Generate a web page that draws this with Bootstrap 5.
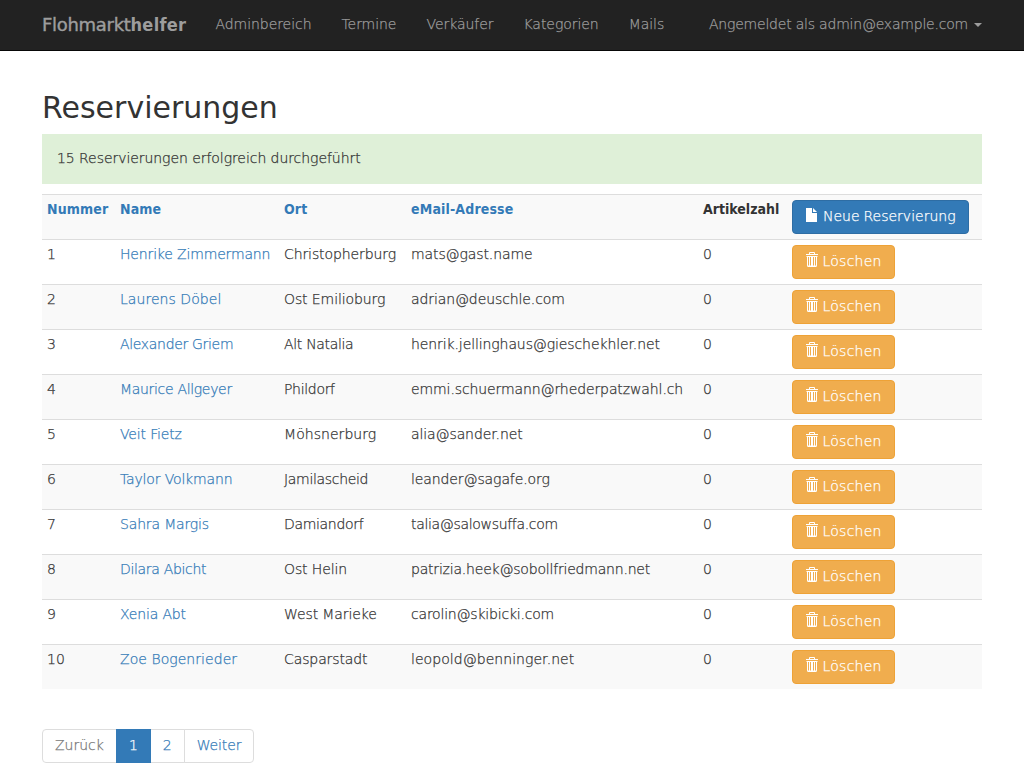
<!DOCTYPE html>
<html lang="de">
<head>
<meta charset="utf-8">
<meta name="viewport" content="width=device-width, initial-scale=1">
<title>Flohmarkthelfer</title>
<link href="https://cdn.jsdelivr.net/npm/bootstrap@5.3.0/dist/css/bootstrap.min.css" rel="stylesheet">
<style>
body{font-family:"DejaVu Sans",sans-serif;font-size:14px;line-height:20px;font-weight:200;color:#333;overflow:hidden;-webkit-text-stroke:.25px currentColor}
a{color:#337ab7;text-decoration:none}
.page-box{width:940px;margin:0 auto}
.topbar{height:51px;background:#222;border-bottom:1px solid #080808;padding:0}
.topbar .navbar-brand{font-size:18px;line-height:20px;font-weight:400;color:#9d9d9d;padding:15px 0;margin:0 14px 0 0;letter-spacing:-.3px;-webkit-text-stroke:.4px currentColor}
.topbar .navbar-brand b{font-family:"DejaVu Sans Condensed","DejaVu Sans",sans-serif;font-stretch:condensed;letter-spacing:.3px;-webkit-text-stroke:0}
.topbar .nav-link{color:#9d9d9d;padding:14px 15px 16px!important;line-height:20px;letter-spacing:-.05px}
.topbar .dropdown-toggle{padding-right:0!important;letter-spacing:-.21px}
.topbar .dropdown-toggle::after{border-top:4px solid;border-right:4px solid transparent;border-left:4px solid transparent;margin-left:6px;vertical-align:middle}
h2{font-size:30px;line-height:33px;font-weight:500;margin:40px 0 10px;-webkit-text-stroke:0}
.notice{background:#dff0d8;padding:14px 15px 16px;margin-bottom:10px;letter-spacing:-.06px}
.table{--bs-table-striped-bg:#f9f9f9;--bs-table-color:#333;--bs-table-striped-color:#333;table-layout:fixed;margin-bottom:40px;color:#333}
.table>tbody>tr>*{padding:4px 5px 6px;border-width:1px 0 0;border-top:1px solid #ddd;white-space:nowrap}
.table>tbody>tr>:last-child{padding:5px}
.table td:nth-child(2){letter-spacing:-.16px}
.table td:nth-child(3),.table td:nth-child(4){letter-spacing:-.1px}
.table td.tight{letter-spacing:-.32px}
.table td.loose{letter-spacing:.05px}
.table th{font-family:"DejaVu Sans Condensed","DejaVu Sans",sans-serif;font-stretch:condensed;font-weight:700;letter-spacing:.15px;-webkit-text-stroke:0}
.table th:nth-child(5){letter-spacing:0}
.table th.act{font-family:"DejaVu Sans",sans-serif;font-stretch:normal;letter-spacing:0;-webkit-text-stroke:.25px currentColor}
.btn{--bs-btn-padding-x:12px;--bs-btn-padding-y:6px;--bs-btn-font-size:14px;--bs-btn-line-height:20px;--bs-btn-border-radius:4px;--bs-btn-font-weight:200;display:block;width:103px;padding:5px 0 7px 12px;text-align:left;letter-spacing:.25px;word-spacing:-1.200px}
.btn-primary{--bs-btn-bg:#337ab7;--bs-btn-border-color:#2e6da4;width:177px;letter-spacing:0;word-spacing:-.5px}
.btn-warning{--bs-btn-bg:#f0ad4e;--bs-btn-border-color:#eea236;--bs-btn-color:#fff}
.btn svg{width:14px;height:15px;display:inline-block;vertical-align:-1px;fill:currentColor}
.pagination{--bs-pagination-font-size:14px;--bs-pagination-color:#337ab7;--bs-pagination-border-color:#ddd;--bs-pagination-border-radius:4px;--bs-pagination-active-bg:#337ab7;--bs-pagination-active-border-color:#337ab7;--bs-pagination-disabled-color:#777;--bs-pagination-disabled-bg:#fff;--bs-pagination-disabled-border-color:#ddd}
.page-link{padding:5px 12px 7px;line-height:20px}
.page-item:last-child .page-link{letter-spacing:-.15px;padding-right:11.500px}
</style>
</head>
<body>
<svg class="d-none">
<symbol id="i-file" viewBox="0 0 14 15"><path d="M1 1h6v5h5v9H1zM8 1l4 4H8z"/></symbol>
<symbol id="i-trash" viewBox="0 0 14 15"><path fill-rule="evenodd" d="M5 0h4q1 0 1 1v1h3v1H1V2h3V1Q4 0 5 0zM5 1v1h4V1zM1.500 4h11v1H12v8.500q0 1.500-1.500 1.500h-7Q2 15 2 13.500V5h-.5zM3 5v8.500h1V5zM5 5v8.500h1V5zM8 5v8.500h1V5zM10 5v8.500h1V5z"/></symbol>
</svg>
<nav class="navbar navbar-expand topbar">
<div class="page-box d-flex align-items-start">
<a class="navbar-brand" href="#">Flohmarkt<b>helfer</b></a>
<ul class="navbar-nav">
<li class="nav-item"><a class="nav-link" href="#">Adminbereich</a></li>
<li class="nav-item"><a class="nav-link" href="#">Termine</a></li>
<li class="nav-item"><a class="nav-link" href="#">Verkäufer</a></li>
<li class="nav-item"><a class="nav-link" href="#">Kategorien</a></li>
<li class="nav-item"><a class="nav-link" href="#">Mails</a></li>
</ul>
<ul class="navbar-nav ms-auto"><li class="nav-item dropdown"><a class="nav-link dropdown-toggle" href="#">Angemeldet als admin@example.com</a></li></ul>
</div>
</nav>
<main class="page-box">
<h2>Reservierungen</h2>
<div class="notice">15 Reservierungen erfolgreich durchgeführt</div>
<table class="table table-striped">
<colgroup><col style="width:73px"><col style="width:164px"><col style="width:127px"><col style="width:292px"><col style="width:89px"><col style="width:195px"></colgroup>
<tbody>
<tr><th><a href="#">Nummer</a></th><th><a href="#">Name</a></th><th><a href="#">Ort</a></th><th><a href="#">eMail-Adresse</a></th><th>Artikelzahl</th><th class="act"><a class="btn btn-primary" href="#"><svg><use href="#i-file"/></svg> Neue Reservierung</a></th></tr>
<tr><td>1</td><td><a href="#">Henrike Zimmermann</a></td><td>Christopherburg</td><td>mats@gast.name</td><td>0</td><td><a class="btn btn-warning" href="#"><svg><use href="#i-trash"/></svg> Löschen</a></td></tr>
<tr><td>2</td><td class="loose"><a href="#">Laurens Döbel</a></td><td>Ost Emilioburg</td><td>adrian@deuschle.com</td><td>0</td><td><a class="btn btn-warning" href="#"><svg><use href="#i-trash"/></svg> Löschen</a></td></tr>
<tr><td>3</td><td class="tight"><a href="#">Alexander Griem</a></td><td class="tight">Alt Natalia</td><td>henrik.jellinghaus@gieschekhler.net</td><td>0</td><td><a class="btn btn-warning" href="#"><svg><use href="#i-trash"/></svg> Löschen</a></td></tr>
<tr><td>4</td><td class="tight"><a href="#">Maurice Allgeyer</a></td><td class="tight">Phildorf</td><td>emmi.schuermann@rhederpatzwahl.ch</td><td>0</td><td><a class="btn btn-warning" href="#"><svg><use href="#i-trash"/></svg> Löschen</a></td></tr>
<tr><td>5</td><td><a href="#">Veit Fietz</a></td><td class="loose">Möhsnerburg</td><td>alia@sander.net</td><td>0</td><td><a class="btn btn-warning" href="#"><svg><use href="#i-trash"/></svg> Löschen</a></td></tr>
<tr><td>6</td><td><a href="#">Taylor Volkmann</a></td><td class="tight">Jamilascheid</td><td>leander@sagafe.org</td><td>0</td><td><a class="btn btn-warning" href="#"><svg><use href="#i-trash"/></svg> Löschen</a></td></tr>
<tr><td>7</td><td><a href="#">Sahra Margis</a></td><td class="tight">Damiandorf</td><td class="tight">talia@salowsuffa.com</td><td>0</td><td><a class="btn btn-warning" href="#"><svg><use href="#i-trash"/></svg> Löschen</a></td></tr>
<tr><td>8</td><td class="tight"><a href="#">Dilara Abicht</a></td><td>Ost Helin</td><td style="letter-spacing:-.2px">patrizia.heek@sobollfriedmann.net</td><td>0</td><td><a class="btn btn-warning" href="#"><svg><use href="#i-trash"/></svg> Löschen</a></td></tr>
<tr><td>9</td><td><a href="#">Xenia Abt</a></td><td>West Marieke</td><td style="letter-spacing:-.2px">carolin@skibicki.com</td><td>0</td><td><a class="btn btn-warning" href="#"><svg><use href="#i-trash"/></svg> Löschen</a></td></tr>
<tr><td>10</td><td class="loose"><a href="#">Zoe Bogenrieder</a></td><td>Casparstadt</td><td class="loose">leopold@benninger.net</td><td>0</td><td><a class="btn btn-warning" href="#"><svg><use href="#i-trash"/></svg> Löschen</a></td></tr>
</tbody>
</table>
<ul class="pagination mb-0">
<li class="page-item disabled"><span class="page-link">Zurück</span></li>
<li class="page-item active"><a class="page-link" href="#">1</a></li>
<li class="page-item"><a class="page-link" href="#">2</a></li>
<li class="page-item"><a class="page-link" href="#">Weiter</a></li>
</ul>
</main>
<script src="https://cdn.jsdelivr.net/npm/bootstrap@5.3.0/dist/js/bootstrap.bundle.min.js"></script>
</body>
</html>
